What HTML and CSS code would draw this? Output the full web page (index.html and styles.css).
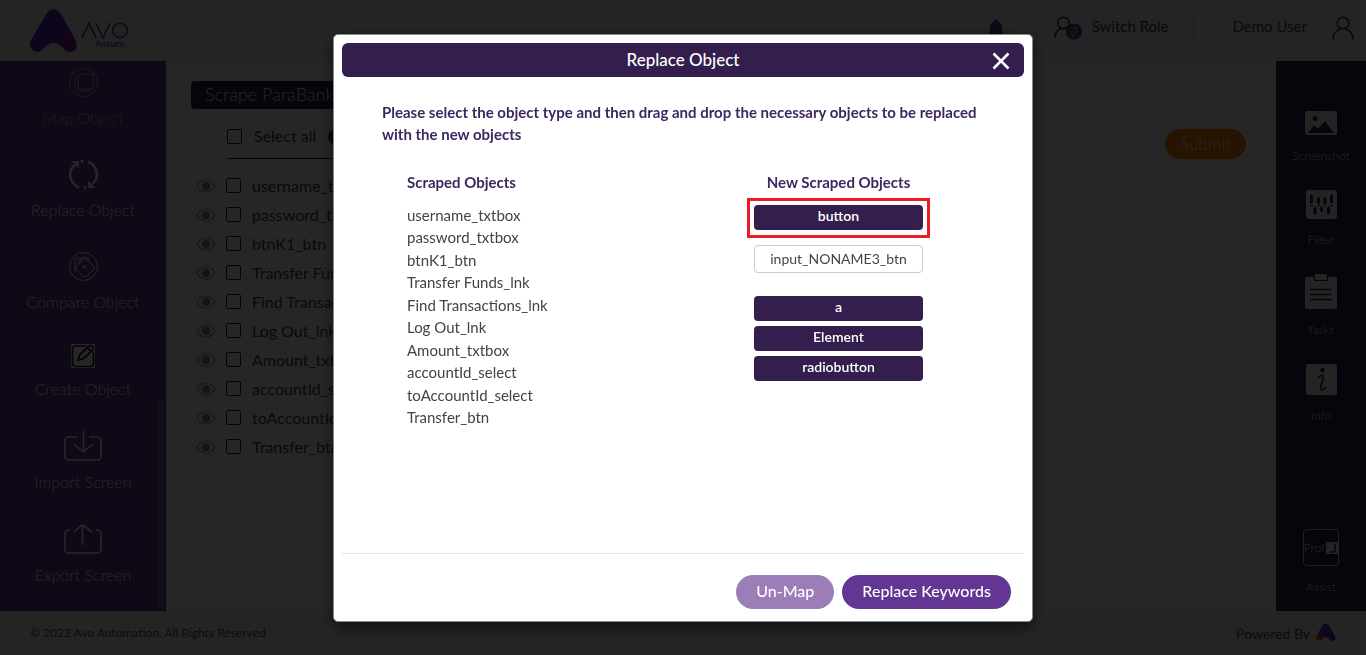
FILE: index.html
```
<!DOCTYPE html>
<html lang="en">

<head>
    <meta charset="UTF-8">
    <meta name="viewport" content="width=device-width, initial-scale=1.0">
    <title>Avo Assure</title>
    <link rel="stylesheet" href="styles.css">
</head>

<body>
    <!-- shared icons -->
    <svg class="defs" width="0" height="0">
        <defs>
            <linearGradient id="logoFill" x1="0" y1="0" x2="1" y2="1">
                <stop offset="0.2" stop-color="#4a2ac8" />
                <stop offset="1" stop-color="#8a10a0" />
            </linearGradient>
            <linearGradient id="markFill" x1="0" y1="1" x2="1" y2="0">
                <stop offset="0" stop-color="#ff7a00" />
                <stop offset="0.15" stop-color="#f05030" />
                <stop offset="0.4" stop-color="#4a2ac8" />
                <stop offset="1" stop-color="#5a30c0" />
            </linearGradient>
        </defs>
        <symbol id="eye" viewBox="0 0 20 14">
            <path d="M1 7C3 3 6.500 1 10 1s7 2 9 6c-2 4-5.500 6-9 6S3 11 1 7z" fill="none" stroke="#999" stroke-width="1.200" />
            <circle cx="10" cy="7" r="4.200" fill="#888" />
            <path d="M7.500 6.500a2.500 2.500 0 0 1 2-2" fill="none" stroke="#ddd" stroke-width="0.700" />
        </symbol>
        <symbol id="person" viewBox="0 0 22 24">
            <circle cx="11" cy="7" r="5.800" fill="none" stroke="currentColor" stroke-width="1.600" />
            <path d="M1 23.500c0-6 3.500-9 7-10.500M21 23.500c0-6-3.500-9-7-10.500" fill="none" stroke="currentColor" stroke-width="1.600" />
        </symbol>
    </svg>

    <div class="page">
        <header class="header">
            <a class="logo" href="#" aria-label="Avo Assure">
                <svg width="48" height="43" viewBox="0 0 48 43">
                    <path d="M17 4Q23.500-3.500 30.500 4L46 32Q49 41 41 43Q37 43.500 34 40.500Q24 27 13 40.500Q9 44 4 42Q-2 38 1 31z" fill="url(#logoFill)" />
                </svg>
                <svg class="logo-name" width="48" height="28" viewBox="0 0 48 28">
                    <path d="M1 17L8 2l7 15M15 2l7 15 7-15" fill="none" stroke="#5a2d9c" stroke-width="1.500" />
                    <circle cx="39" cy="9.500" r="7.200" fill="none" stroke="#5a2d9c" stroke-width="1.500" />
                    <text x="14" y="26" class="logo-sub">Assure</text>
                </svg>
            </a>
            <div class="header-right">
                <svg class="bell" width="16" height="22" viewBox="0 0 16 22">
                    <path d="M8 0a1.500 1.500 0 0 1 1.500 2c3 1 4.500 3 4.500 7 0 4 1 6 2 8H0c1-2 2-4 2-8 0-4 1.500-6 4.500-7A1.500 1.500 0 0 1 8 0zM6 18h4a2 2 0 0 1-4 0z" fill="#633693" />
                </svg>
                <a class="switch-role" href="#">
                    <svg width="28" height="24" viewBox="0 0 28 24">
                        <circle cx="9.500" cy="7" r="5.800" fill="none" stroke="#222" stroke-width="1.400" />
                        <path d="M1 22c0-5 2.500-8 6-9.500M12 12.500l2 1" fill="none" stroke="#222" stroke-width="1.400" />
                        <circle cx="20" cy="15.500" r="8" fill="#633693" />
                        <path d="M16.500 17l5.500-5.500M22 11.500v3M22 11.500h-3M23.500 14.500L18 20M18 20v-3M18 20h3" fill="none" stroke="#ccc" stroke-width="1" />
                    </svg>
                    Switch Role
                </a>
                <a class="user" href="#">
                    Demo User
                    <svg width="22" height="24"><use href="#person" /></svg>
                </a>
            </div>
        </header>

        <nav class="sidebar">
            <a class="side-item disabled" href="#">
                <svg width="29" height="29" viewBox="0 0 29 29" fill="none" stroke="currentColor">
                    <circle cx="14.500" cy="14.500" r="14" />
                    <rect x="9" y="6" width="15" height="15" rx="3" />
                    <path d="M8 8q-2 1-2 3v8q0 4 4 4h8q3 0 4-2" />
                </svg>
                Map Object
            </a>
            <a class="side-item" href="#">
                <svg width="29" height="29" viewBox="0 0 29 29" fill="none" stroke="currentColor" stroke-width="2.600">
                    <path d="M10 27.500C-1 22-1 10 6 5M19 1.500C30 7 30 19 23 24" />
                    <path d="M2.500 1H10v7.500zM26.500 28H19v-7.500z" fill="currentColor" stroke="none" />
                    <circle cx="13" cy="1.500" r="1.400" fill="currentColor" stroke="none" />
                    <circle cx="16" cy="27.500" r="1.400" fill="currentColor" stroke="none" />
                </svg>
                Replace Object
            </a>
            <a class="side-item" href="#">
                <svg width="29" height="29" viewBox="0 0 29 29" fill="none" stroke="currentColor">
                    <circle cx="14.500" cy="14.500" r="14" />
                    <path d="M16 6l9 9q1 1 0 2l-8 8q-1 1-2 0l-8-8q-1-1 0-2z" />
                    <path d="M6 20V8q0-2 2-2h10q2 0 2 2v2M8 20H6M14 14l4 4M14 17.500V14h4M8 9l5-2M8 12l4-4" />
                </svg>
                Compare Object
            </a>
            <a class="side-item" href="#">
                <svg width="24" height="24" viewBox="0 0 24 24">
                    <path d="M0 0h24v24H0z" fill="currentColor" />
                    <path d="M15 2H5Q1.500 2 1.500 5v14q0 3.500 3.500 3.500h14q3.500 0 3.500-3.500V8" fill="none" stroke="#1d0f30" stroke-width="1.600" />
                    <path d="M7 16l1.500-5L18 2q2-1 3.500.5T22 6l-10 9z M16.500 3.500l4 4" fill="none" stroke="#1d0f30" stroke-width="1.800" />
                </svg>
                Create Object
            </a>
            <a class="side-item" href="#">
                <svg width="38" height="30" viewBox="0 0 38 30" fill="none" stroke="currentColor" stroke-width="1.600">
                    <path d="M13 6H5Q1 6 1 10v15q0 4 4 4h28q4 0 4-4V10q0-4-4-4h-8M19.500 0v21M10 13l9.500 8 9.500-8" />
                </svg>
                Import Screen
            </a>
            <a class="side-item" href="#">
                <svg width="38" height="30" viewBox="0 0 38 30" fill="none" stroke="currentColor" stroke-width="1.600">
                    <path d="M6 6Q1 6 1 10v15q0 4 4 4h28q4 0 4-4V10q0-4-5-4M18.500 21V1M10 8l8.500-7.500L28 8" />
                </svg>
                Export Screen
            </a>
            <span class="scroll-thumb"></span>
        </nav>

        <main class="content">
            <h1 class="screen-name">Scrape ParaBank</h1>
            <div class="toolbar">
                <label class="select-all"><input type="checkbox"> Select all</label>
                <span class="dot"></span>
                <button class="submit" type="button">Submit</button>
            </div>
            <ul class="objects">
                <li><svg><use href="#eye" /></svg><label><input type="checkbox"> username_txtbox</label></li>
                <li><svg><use href="#eye" /></svg><label><input type="checkbox"> password_txtbox</label></li>
                <li><svg><use href="#eye" /></svg><label><input type="checkbox"> btnK1_btn</label></li>
                <li><svg><use href="#eye" /></svg><label><input type="checkbox"> Transfer Funds_lnk</label></li>
                <li><svg><use href="#eye" /></svg><label><input type="checkbox"> Find Transactions_lnk</label></li>
                <li><svg><use href="#eye" /></svg><label><input type="checkbox"> Log Out_lnk</label></li>
                <li><svg><use href="#eye" /></svg><label><input type="checkbox"> Amount_txtbox</label></li>
                <li><svg><use href="#eye" /></svg><label><input type="checkbox"> accountId_select</label></li>
                <li><svg><use href="#eye" /></svg><label><input type="checkbox"> toAccountId_select</label></li>
                <li><svg><use href="#eye" /></svg><label><input type="checkbox"> Transfer_btn</label></li>
            </ul>
        </main>

        <aside class="refbar">
            <a href="#">
                <svg width="32" height="24" viewBox="0 0 32 24">
                    <rect width="32" height="24" rx="2" fill="currentColor" />
                    <circle cx="10" cy="7.500" r="2.500" fill="#2f1b4c" />
                    <path d="M3 22l6-8 4 4 7-8 9 12z" fill="#2f1b4c" />
                </svg>
                Screenshot
            </a>
            <a href="#">
                <svg width="31" height="29" viewBox="0 0 31 29">
                    <rect width="31" height="29" rx="3" fill="currentColor" />
                    <path d="M5.500 6v6M12.500 8.500v4M19 8.500v4M25.500 6v6M9 18v5M15.500 18v2.500M22.500 18v5" stroke="#2f1b4c" stroke-width="3" stroke-linecap="round" />
                    <path d="M4 15.500h3M11 15.500h3M17.500 15.500h3M24 15.500h3" stroke="#2f1b4c" stroke-width="1" />
                </svg>
                Filter
            </a>
            <a href="#">
                <svg width="32" height="35" viewBox="0 0 32 35">
                    <path d="M2 3h7v4h14V3h7q2 0 2 2v28q0 2-2 2H2q-2 0-2-2V5q0-2 2-2z" fill="currentColor" />
                    <path d="M10 0h12v6H10z" fill="currentColor" />
                    <path d="M6 15.500h20M6 20.500h20M6 25.500h20" stroke="#2f1b4c" stroke-width="1.600" stroke-linecap="round" />
                </svg>
                Tasks
            </a>
            <a href="#">
                <svg width="31" height="31" viewBox="0 0 31 31">
                    <rect width="31" height="31" rx="2" fill="currentColor" />
                    <circle cx="16.500" cy="6" r="2.200" fill="#2f1b4c" />
                    <path d="M12 13.500q4-3 5-2t-.5 5-1.500 8.500q1 2.500 5-2" fill="none" stroke="#2f1b4c" stroke-width="1.800" />
                </svg>
                Info
            </a>
            <a class="assist" href="#">
                <span class="prof">Prof
                    <svg width="12" height="12" viewBox="0 0 12 12">
                        <rect width="12" height="12" rx="1" fill="currentColor" />
                        <path d="M9 2v6q0 2-2 2H5.500" fill="none" stroke="#2f1b4c" stroke-width="1.500" />
                        <path d="M3 9h1.500v1.500H3z" fill="#2f1b4c" />
                    </svg>
                </span>
                Assist
            </a>
        </aside>

        <footer class="footer">
            <span>© 2022 Avo Automation. All Rights Reserved</span>
            <a class="powered" href="#">
                Powered By
                <svg width="20" height="18" viewBox="0 0 48 43">
                    <path d="M17 4Q23.500-3.500 30.500 4L46 32Q49 41 41 43Q37 43.500 34 40.500Q24 27 13 40.500Q9 44 4 42Q-2 38 1 31z" fill="url(#markFill)" />
                </svg>
            </a>
        </footer>
    </div>

    <div class="overlay">
        <section class="modal" role="dialog" aria-labelledby="modalTitle">
            <div class="modal-header">
                <h2 id="modalTitle">Replace Object</h2>
                <button class="close" type="button" aria-label="Close">
                    <svg width="18" height="18" viewBox="0 0 18 18">
                        <path d="M1.500 1.500l15 15M16.500 1.500l-15 15" stroke="#fff" stroke-width="2.600" />
                    </svg>
                </button>
            </div>
            <div class="modal-body">
                <p class="hint">Please select the object type and then drag and drop the necessary objects to be replaced with the new objects</p>
                <div class="columns">
                    <div class="scraped">
                        <h3>Scraped Objects</h3>
                        <ul>
                            <li>username_txtbox</li>
                            <li>password_txtbox</li>
                            <li>btnK1_btn</li>
                            <li>Transfer Funds_lnk</li>
                            <li>Find Transactions_lnk</li>
                            <li>Log Out_lnk</li>
                            <li>Amount_txtbox</li>
                            <li>accountId_select</li>
                            <li>toAccountId_select</li>
                            <li>Transfer_btn</li>
                        </ul>
                    </div>
                    <div class="new-scraped">
                        <h3>New Scraped Objects</h3>
                        <button class="type active" type="button">button</button>
                        <div class="new-object" draggable="true">input_NONAME3_btn</div>
                        <button class="type" type="button">a</button>
                        <button class="type" type="button">Element</button>
                        <button class="type" type="button">radiobutton</button>
                    </div>
                </div>
            </div>
            <div class="modal-footer">
                <button class="btn" type="button" disabled>Un-Map</button>
                <button class="btn" type="button">Replace Keywords</button>
            </div>
        </section>
    </div>
</body>

</html>
```
FILE: styles.css
```
* {
    margin: 0;
    padding: 0;
    box-sizing: border-box;
}

body {
    font-family: Lato, "Open Sans", sans-serif;
    font-size: 15px;
    line-height: 1.5;
    color: #444;
}

a {
    color: inherit;
    text-decoration: none;
}

ul {
    list-style: none;
}

button {
    border: none;
    font-family: inherit;
    cursor: pointer;
}

svg {
    display: block;
    flex: none;
}

.defs {
    position: absolute;
}

/* page */
.page {
    display: grid;
    grid-template-columns: 166px 1fr 90px;
    grid-template-rows: 61px 1fr 44px;
    height: 100vh;
    font-weight: 300;
}

.header {
    grid-column: 1 / -1;
    display: flex;
    justify-content: space-between;
    padding: 9px 12px 0 30px;
    background: #eee;
    font-weight: 400;
}

.logo {
    display: flex;
    gap: 3px;
}

.logo-name {
    margin-top: 12px;
}

.logo-sub {
    font-size: 10px;
    font-weight: 400;
    fill: #5a2d9c;
}

.header-right {
    display: flex;
    align-items: flex-start;
    padding-top: 7px;
}

.bell {
    margin: 3px 50px 0 0;
}

.switch-role,
.user {
    display: flex;
    gap: 10px;
    line-height: 20px;
}

.switch-role {
    padding-right: 24px;
    border-right: 1px solid #bbb;
}

.user {
    gap: 25px;
    padding-left: 39px;
}

/* left menu */
.sidebar {
    position: relative;
    display: flex;
    flex-direction: column;
    gap: 31px;
    padding-top: 7px;
    background: #643596;
    color: #fff;
    overflow: hidden;
}

.side-item {
    display: flex;
    flex-direction: column;
    align-items: center;
    gap: 10px;
    font-size: 16px;
    line-height: 22px;
}

.side-item.disabled {
    opacity: 0.6;
}

.scroll-thumb {
    position: absolute;
    right: 2px;
    bottom: 0;
    width: 6px;
    height: 39%;
    border-radius: 3px;
    background: #8659a8;
}

/* scraped list behind the modal */
.content {
    padding: 20px 25px 0 20px;
    border: solid #f6f6f6;
    border-width: 0 5px;
    background: #fff;
}

.screen-name {
    width: 220px;
    padding-left: 14px;
    border-radius: 4px;
    background: #2f1b4c;
    color: #fff;
    font-size: 18px;
    font-weight: 300;
    line-height: 27px;
    padding-bottom: 1px;
}

.toolbar {
    display: flex;
    align-items: flex-start;
    padding: 20px 0 0 36px;
}

.select-all {
    display: flex;
    align-items: center;
    gap: 12px;
    height: 14px;
    font-size: 16px;
    font-weight: 400;
}

.dot {
    width: 16px;
    height: 16px;
    margin-left: 12px;
    border-radius: 50%;
    background: #643596;
}

.submit {
    height: 30px;
    margin-left: auto;
    padding: 0 15px 2px;
    border-radius: 15px;
    background: #ff7d00;
    color: #fff;
    font-size: 17px;
    font-weight: 300;
}

input[type="checkbox"] {
    appearance: none;
    width: 15px;
    height: 15px;
    border: 1px solid #222;
    border-radius: 2px;
}

.objects {
    width: 400px;
    padding-left: 5px;
}

/* rule under the toolbar, starts at the checkboxes */
.objects::before {
    content: "";
    display: block;
    height: 12px;
    margin: -1px 0 0 31px;
    border-top: 1px solid #222;
}

.objects li {
    display: flex;
    align-items: center;
    gap: 10px;
    height: 29px;
    font-size: 16px;
    font-weight: 400;
}

.objects svg {
    width: 20px;
    height: 14px;
}

.objects label {
    display: flex;
    align-items: center;
    gap: 11px;
}

/* right menu */
.refbar {
    display: flex;
    flex-direction: column;
    gap: 25px;
    padding: 50px 0 15px;
    background: #2f1b4c;
    color: #eee;
    font-size: 12px;
    line-height: 18px;
}

.refbar a {
    display: flex;
    flex-direction: column;
    align-items: center;
    gap: 12px;
}

.refbar .assist {
    margin-top: auto;
}

.prof {
    display: flex;
    align-items: center;
    justify-content: center;
    gap: 1px;
    width: 36px;
    height: 37px;
    border: 1px solid #ddd;
    border-radius: 4px;
}

.footer {
    grid-column: 1 / -1;
    display: flex;
    align-items: center;
    justify-content: space-between;
    padding: 0 30px;
    background: #eee;
    color: #5a4a76;
    font-size: 12px;
    font-weight: 400;
}

.powered {
    display: flex;
    gap: 6px;
    font-size: 14px;
}

/* modal */
.overlay {
    position: fixed;
    inset: 0;
    display: flex;
    align-items: center;
    justify-content: center;
    background: rgba(0, 0, 0, 0.85);
}

.modal {
    width: 700px;
    max-width: 96%;
    padding: 8px 8px 7px;
    border: 1px solid #888;
    border-radius: 5px;
    background: #fff;
    box-shadow: 0 5px 15px rgba(0, 0, 0, 0.5);
}

.modal-header {
    position: relative;
    border-radius: 6px;
    background: #331e4e;
    color: #fff;
    text-align: center;
}

.modal-header h2 {
    font-size: 17px;
    font-weight: 500;
    line-height: 34px;
}

.close {
    position: absolute;
    top: 9px;
    right: 14px;
    background: none;
}

.modal-body {
    height: 477px;
    padding: 24px 40px 0;
    border-bottom: 1px solid #e5e5e5;
}

.hint,
.modal h3 {
    color: #3d2860;
    font-size: 15px;
    font-weight: 700;
    line-height: 22px;
}

.columns {
    display: flex;
    justify-content: space-between;
    padding: 26px 61px 0 25px;
}

.scraped h3 {
    margin-bottom: 11px;
}

.new-scraped {
    width: 169px;
    text-align: center;
}

.new-scraped h3 {
    margin-bottom: 12px;
}

.type {
    position: relative;
    display: block;
    width: 100%;
    height: 25px;
    margin-bottom: 5px;
    padding-bottom: 3px;
    border-radius: 4px;
    background: #331e4e;
    color: #fff;
    font-size: 14px;
    font-weight: 600;
}

/* square frame round the selected type */
.type.active::after {
    content: "";
    position: absolute;
    inset: -7px -7px -8px;
    border: 3px solid #ed1c24;
}

.new-object {
    margin: 15px 0 23px;
    border: 1px solid #ccc;
    border-radius: 4px;
    font-size: 14px;
    line-height: 26px;
}

.modal-footer {
    display: flex;
    justify-content: flex-end;
    gap: 8px;
    padding: 21px 13px 5px;
}

.btn {
    height: 34px;
    padding: 0 20px 2px;
    border-radius: 17px;
    background: #633693;
    color: #fff;
    font-size: 16px;
    font-weight: 500;
}

.btn:disabled {
    background: #9b7db8;
}
```
